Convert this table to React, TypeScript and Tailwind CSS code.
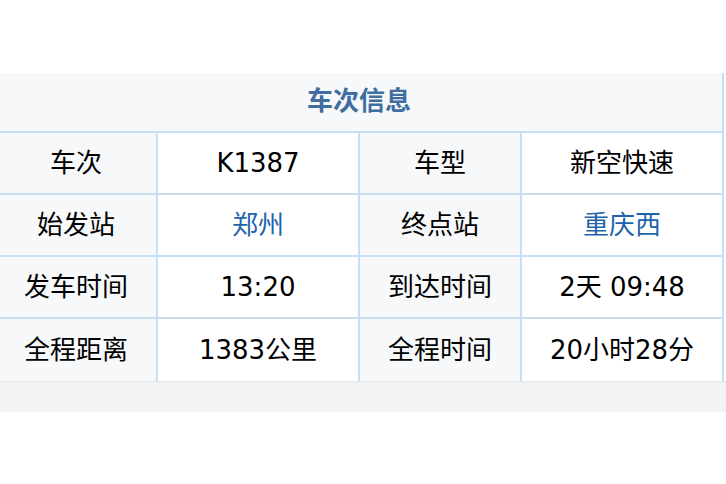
const rows = [
  { a: '车次', b: 'K1387', c: '车型', d: '新空快速' },
  { a: '始发站', b: '郑州', c: '终点站', d: '重庆西', link: true },
  { a: '发车时间', b: '13:20', c: '到达时间', d: '2天 09:48' },
  { a: '全程距离', b: '1383公里', c: '全程时间', d: '20小时28分' },
];

export default function App() {
  return (
    <div
      className="w-[726px] h-[484px] bg-white pt-[73px] text-[26px] text-black"
      style={{ fontFamily: '"DejaVu Sans", "Noto Sans CJK SC", sans-serif' }}
    >
      <div className="w-[724px]">
        <div className="h-[60px] flex items-center justify-center bg-[#f6f8fa] border-r-2 border-b-2 border-[#c8def2] text-[#3f6e9f] font-bold pb-[2px] pr-[4px]">
          车次信息
        </div>
        {rows.map((r, i) => (
          <div
            key={i}
            className={`grid grid-cols-[158px_202px_162px_202px] h-[62px] ${
              i < rows.length - 1 ? 'border-b-2 border-[#c8def2]' : ''
            }`}
          >
            <div className="flex items-center justify-center bg-[#f6f8fa] border-r-2 border-[#c8def2] pr-[4px]">
              {r.a}
            </div>
            <div
              className={`flex items-center justify-center bg-white border-r-2 border-[#c8def2] ${
                r.link ? 'text-[#1f63ab]' : ''
              }`}
            >
              {r.b}
            </div>
            <div className="flex items-center justify-center bg-[#f6f8fa] border-r-2 border-[#c8def2]">
              {r.c}
            </div>
            <div
              className={`flex items-center justify-center bg-white border-r-2 border-[#c8def2] ${
                r.link ? 'text-[#1f63ab]' : ''
              }`}
            >
              {r.d}
            </div>
          </div>
        ))}
      </div>
      <div className="w-[726px] h-[31px] bg-[#f2f3f5] border-t border-[#e3e5e8]" />
    </div>
  );
}
